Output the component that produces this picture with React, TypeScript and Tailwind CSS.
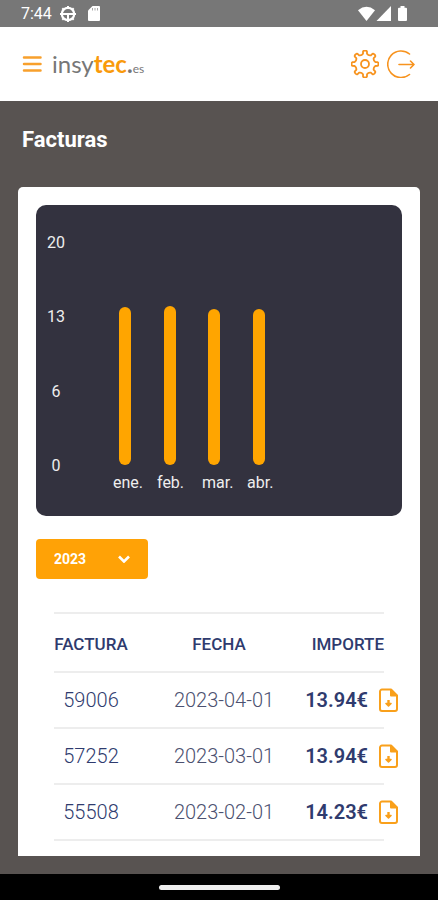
type Invoice = { id: string; date: string; amount: string };

const invoices: Invoice[] = [
  { id: "59006", date: "2023-04-01", amount: "13.94€" },
  { id: "57252", date: "2023-03-01", amount: "13.94€" },
  { id: "55508", date: "2023-02-01", amount: "14.23€" },
];

const axis = [
  { label: "20", y: 43 },
  { label: "13", y: 117 },
  { label: "6", y: 192 },
  { label: "0", y: 266 },
];

const months = [
  { label: "ene.", x: 83, labelX: 77, top: 102 },
  { label: "feb.", x: 128, labelX: 121, top: 101 },
  { label: "mar.", x: 172, labelX: 166, top: 104 },
  { label: "abr.", x: 217, labelX: 211, top: 104 },
];

function polar(radius: number, degrees: number) {
  const a = (degrees * Math.PI) / 180;
  return `${(14 + radius * Math.cos(a)).toFixed(2)} ${(14 + radius * Math.sin(a)).toFixed(2)}`;
}

// Eight rounded teeth joined by concave notches.
const gearPath =
  [0, 45, 90, 135, 180, 225, 270, 315]
    .map(
      (a, i) =>
        `${i === 0 ? "M" : "L"}${polar(10.5, a - 11)} L${polar(12.6, a - 9)} Q${polar(13.6, a - 7)} ${polar(13.4, a)} Q${polar(13.6, a + 7)} ${polar(12.6, a + 9)} L${polar(10.5, a + 11)} Q${polar(8.9, a + 22.5)} ${polar(10.5, a + 34)}`,
    )
    .join(" ") + "Z";

function StatusBar() {
  return (
    <div className="flex h-[27px] items-center justify-between bg-[#777777] pr-[30px] pl-[21px] text-white">
      <div className="flex items-center gap-2">
        <span className="text-base leading-5">7:44</span>
        <svg className="size-4" viewBox="0 0 16 16" fill="none" stroke="currentColor">
          <circle cx="8" cy="8" r="6.200" strokeWidth="2.200" />
          <path d="M2 8h12M8 8v6" strokeWidth="2" />
          <path d="M8 0v2M8 14v2M0 8h2M14 8h2M2.300 2.300l1 1M12.700 12.700l1 1M2.300 13.700l1-1M12.700 3.300l1-1" strokeWidth="2" />
        </svg>
        <svg className="ml-1 h-4 w-3" viewBox="0 0 12 16" fill="currentColor">
          <path d="M4.500 0H11a1 1 0 0 1 1 1v13a1 1 0 0 1-1 1H1a1 1 0 0 1-1-1V4.500z" />
          <path d="M4.500 2v2.500M7 2v2.500M9.500 2v2.500" stroke="#a8a8a8" strokeWidth="1" />
        </svg>
      </div>
      <svg className="h-4 w-[50px]" viewBox="0 0 50 16" fill="currentColor">
        <path d="M0 4.200Q8.500-2.600 17 4.200L8.500 15z" />
        <path d="M33 0v15H18.500z" />
        <path d="M42.500 0h4v1.700h1.500a1 1 0 0 1 1 1V14a1 1 0 0 1-1 1h-7a1 1 0 0 1-1-1V2.700a1 1 0 0 1 1-1h1.500z" />
      </svg>
    </div>
  );
}

function Header() {
  return (
    <header className="flex h-[74px] items-center justify-between bg-white pr-[23px] pl-[22px]">
      <div className="flex items-center gap-2">
        <button type="button" aria-label="Menú" className="text-[#f8a02c]">
          <svg className="h-4 w-5" viewBox="0 0 20 16" fill="none" stroke="currentColor" strokeWidth="2.500" strokeLinecap="round">
            <path d="M2 1.500h16.500M2 8h16.500M2 14.500h16.500" />
          </svg>
        </button>
        <a href="#inicio" className="pl-0.5 font-[Lato,sans-serif] text-2xl leading-7 text-[#777777]">
          insy<span className="font-bold text-[#f99a0b]">tec</span>
          <span className="font-bold">.</span>
          <span className="text-xs">es</span>
        </a>
      </div>
      <div className="flex items-center gap-2 text-[#f7931e]">
        <button type="button" aria-label="Ajustes">
          <svg className="size-7" viewBox="0 0 28 28" fill="none" stroke="currentColor" strokeWidth="1.800" strokeLinejoin="round">
            <path d={gearPath} />
            <circle cx="14" cy="14" r="4" />
          </svg>
        </button>
        <button type="button" aria-label="Salir">
          <svg className="size-7" viewBox="0 0 28 28" fill="none" stroke="currentColor" strokeWidth="1.600" strokeLinecap="round" strokeLinejoin="round">
            <path d="M22.500 4A13.300 13.300 0 1 0 22.500 24.500" />
            <path d="M12 14.500h15M23.500 11l3.500 3.500-3.500 3.500" />
          </svg>
        </button>
      </div>
    </header>
  );
}

function Chart() {
  return (
    <svg className="block w-full rounded-[10px] bg-[#33323f]" viewBox="0 0 366 311" role="img" aria-label="Facturas por mes">
      {axis.map((a) => (
        <text key={a.label} x="20" y={a.y} textAnchor="middle" className="fill-[#eeeeee] text-base">
          {a.label}
        </text>
      ))}
      {months.map((m) => (
        <g key={m.label}>
          <rect x={m.x} y={m.top} width="12" height={260 - m.top} rx="6" fill="#ffa500" />
          <text x={m.labelX} y="283" className="fill-[#eeeeee] text-base">
            {m.label}
          </text>
        </g>
      ))}
    </svg>
  );
}

function YearSelect() {
  return (
    <div className="relative mt-[23px] h-10 w-28">
      <select
        aria-label="Año"
        defaultValue="2023"
        className="h-full w-full appearance-none rounded bg-[#ffa206] pl-[18px] text-sm font-bold text-white"
      >
        <option>2023</option>
        <option>2022</option>
      </select>
      <svg className="pointer-events-none absolute top-4 right-[18px] h-2 w-3" viewBox="0 0 12 8" fill="none" stroke="white" strokeWidth="2.600">
        <path d="M1 1.500l5 5 5-5" />
      </svg>
    </div>
  );
}

function FileDownload() {
  return (
    <svg className="h-6 w-5" viewBox="0 0 20 24" fill="none" stroke="#f9a01b" strokeWidth="2" strokeLinejoin="round">
      <path d="M4 1.500h9l6 6V21a2 2 0 0 1-2 2H4a2 2 0 0 1-2-2V3.500a2 2 0 0 1 2-2z" />
      <path d="M13 2v5.500h5.500z" fill="#f9a01b" />
      <path d="M10.500 12v4" strokeWidth="2.400" />
      <path d="M8 15.500h5l-2.500 2.500z" fill="#f9a01b" strokeWidth="1.600" />
    </svg>
  );
}

function InvoiceTable() {
  return (
    <div className="mt-[33px] px-[18px]">
      <table className="w-full table-fixed border-separate border-spacing-0 text-[#2f3b6e]">
        <thead>
          <tr className="h-[61px] text-[17px]">
            <th className="w-[74px] border-t-2 border-b-2 border-[#ededed] p-0 pt-1 font-medium">FACTURA</th>
            <th className="border-t-2 border-b-2 border-[#ededed] p-0 pt-1 font-medium">FECHA</th>
            <th className="w-[74px] border-t-2 border-b-2 border-[#ededed] p-0 pt-1 text-right font-medium">IMPORTE</th>
          </tr>
        </thead>
        <tbody>
          {invoices.map((inv) => (
            <tr key={inv.id} className="h-14 text-xl">
              <td className="border-b-2 border-[#ededed] p-0 text-center font-light">{inv.id}</td>
              <td className="border-b-2 border-[#ededed] p-0 pl-2.5 text-center font-light whitespace-nowrap text-[#4c5170]">{inv.date}</td>
              <td className="border-b-2 border-[#ededed] p-0 font-semibold">
                <div className="-mr-3.5 flex items-center justify-end gap-2.5">
                  <span>{inv.amount}</span>
                  <button type="button" aria-label={`Descargar factura ${inv.id}`} className="shrink-0">
                    <FileDownload />
                  </button>
                </div>
              </td>
            </tr>
          ))}
        </tbody>
      </table>
    </div>
  );
}

export default function App() {
  return (
    <div className="flex min-h-screen flex-col bg-[#585351] font-[Roboto,sans-serif]">
      <StatusBar />
      <Header />
      <main className="flex-1 px-[18px] pb-[18px]">
        <h1 className="px-1 pt-[25px] pb-[33px] text-[22px] leading-7 font-bold text-white">Facturas</h1>
        <section className="rounded-t-[5px] bg-white px-[18px] pt-[18px] pb-[15px]">
          <Chart />
          <YearSelect />
          <InvoiceTable />
        </section>
      </main>
      <div className="flex h-[26px] items-center justify-center bg-black">
        <div className="h-[5px] w-[121px] rounded-full bg-[#eeeeee]" />
      </div>
    </div>
  );
}
